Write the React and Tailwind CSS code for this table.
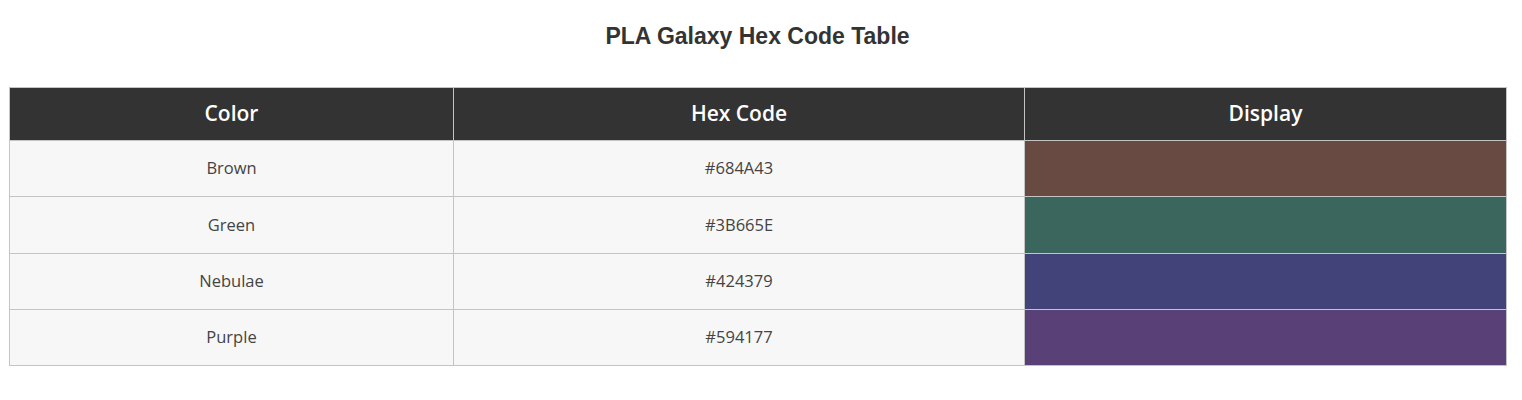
import React from "react";

const rows = [
    { name: "Brown", hex: "#684A43", swatch: "bg-[#684A43]" },
    { name: "Green", hex: "#3B665E", swatch: "bg-[#3B665E]" },
    { name: "Nebulae", hex: "#424379", swatch: "bg-[#424379]" },
    { name: "Purple", hex: "#594177", swatch: "bg-[#594177]" },
];

function App() {
    return (
        <div className="w-full min-h-screen bg-white pl-[9px] pr-[16px] pt-[21px]">
            <h2 className="text-center text-[23px] leading-[30px] font-bold text-[#333] font-['Liberation_Sans',Arial,sans-serif]">
                PLA Galaxy Hex Code Table
            </h2>

            <table className="mt-[36px] w-[1497px] border-collapse table-fixed font-['Open_Sans',sans-serif]">
                <colgroup>
                    <col className="w-[444px]" />
                    <col className="w-[571px]" />
                    <col className="w-[482px]" />
                </colgroup>
                <thead>
                    <tr className="h-[53px] bg-[#333]">
                        <th className="border border-[#c4c4c4] text-white text-[21px] font-semibold">Color</th>
                        <th className="border border-[#c4c4c4] text-white text-[21px] font-semibold">Hex Code</th>
                        <th className="border border-[#c4c4c4] text-white text-[21px] font-semibold">Display</th>
                    </tr>
                </thead>
                <tbody>
                    {rows.map((row) => (
                        <tr key={row.name} className="h-[56.25px] bg-[#f7f7f7]">
                            <td className="border border-[#c4c4c4] text-center text-[16.5px] text-[#444]">{row.name}</td>
                            <td className="border border-[#c4c4c4] text-center text-[16.5px] text-[#444]">{row.hex}</td>
                            <td className={`border border-[#c4c4c4] ${row.swatch}`}></td>
                        </tr>
                    ))}
                </tbody>
            </table>
        </div>
    );
}

export default App;
